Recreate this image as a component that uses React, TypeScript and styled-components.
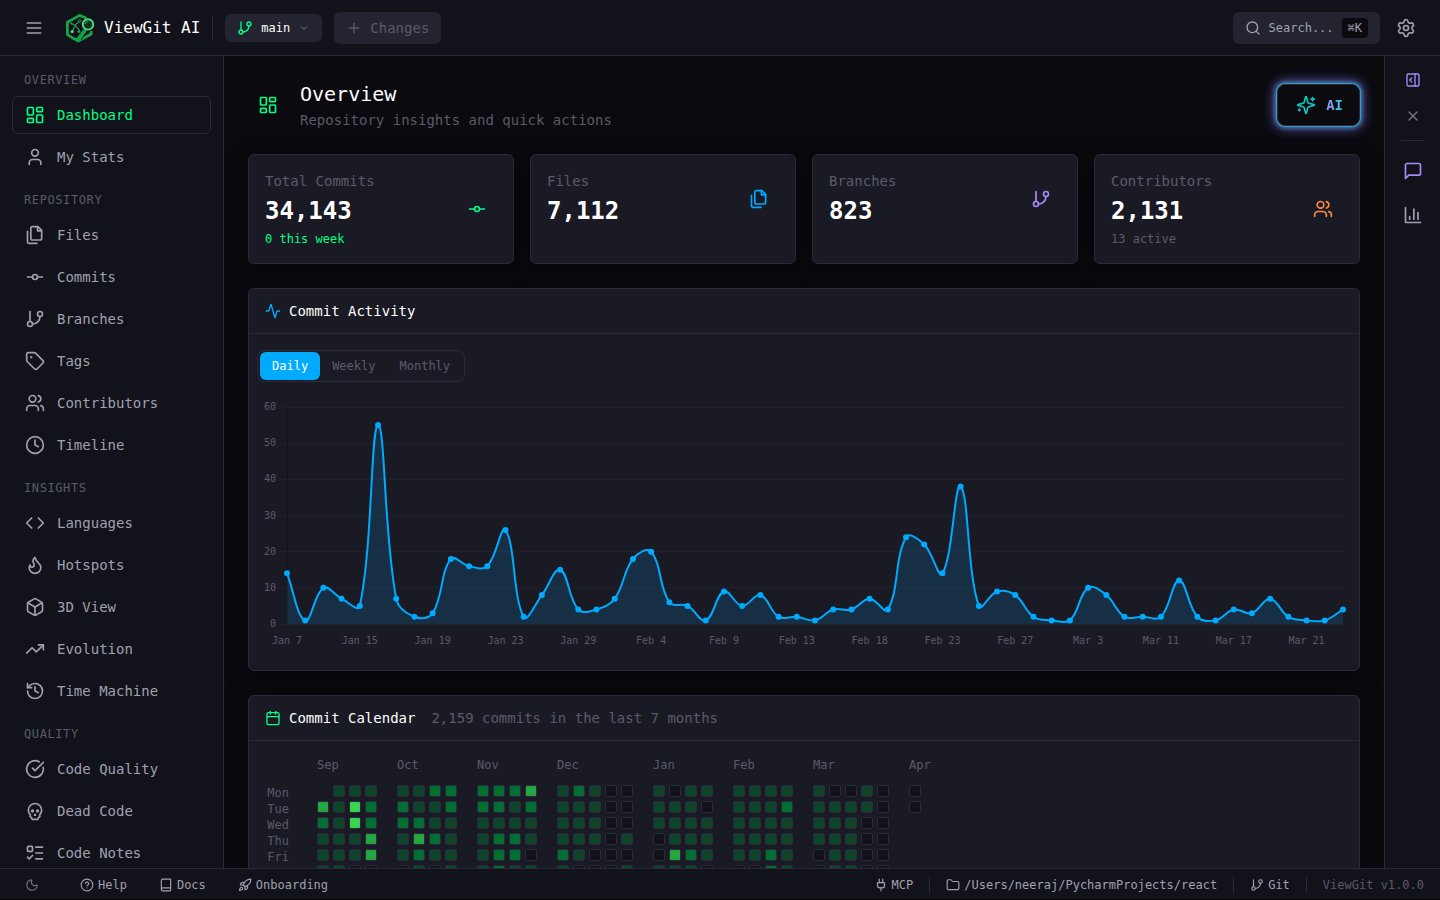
import React, { useLayoutEffect, useRef, useState } from "react";
import styled, { createGlobalStyle, css } from "styled-components";
import {
  Activity,
  Book,
  Box,
  Calendar,
  ChevronDown,
  CircleCheckBig,
  CircleHelp,
  Clock,
  Code,
  Flame,
  Folder,
  GitBranch,
  GitCommitHorizontal,
  History,
  LayoutDashboard,
  ListTodo,
  Moon,
  PanelRightOpen,
  Plug,
  Plus,
  Rocket,
  Search,
  Settings,
  Skull,
  Tag,
  TrendingUp,
  User,
  Users,
  X,
} from "lucide-react";

const color = {
  bg: "#0a0a0f",
  panel: "#12121a",
  card: "#1a1a24",
  raised: "#242430",
  border: "#2a2a3a",
  text: "#ffffff",
  soft: "#a0a0b0",
  dim: "#747482",
  muted: "#5a5a6a",
  green: "#00ff88",
  blue: "#00aaff",
  purple: "#a78bfa",
  orange: "#ff8844",
};

const mono = `"DejaVu Sans Mono", "Liberation Mono", monospace`;

const GlobalStyle = createGlobalStyle`
  *, *::before, *::after { box-sizing: border-box; }
  body {
    margin: 0;
    background: #050508;
    color: ${color.text};
    font-family: ${mono};
    font-size: 14px;
    line-height: 20px;
  }
  button, input, select { font: inherit; color: inherit; }
  h1, h2, p, ul { margin: 0; padding: 0; font-weight: 400; }
  svg { display: block; flex: none; }
`;

/* ---------- icons ---------- */

type IconProps = { size?: number };

const Stroke = ({ size = 20, children }: IconProps & { children: React.ReactNode }) => (
  <svg
    width={size}
    height={size}
    viewBox="0 0 24 24"
    fill="none"
    stroke="currentColor"
    strokeWidth="2"
    strokeLinecap="round"
    strokeLinejoin="round"
    aria-hidden="true"
  >
    {children}
  </svg>
);

const MenuIcon = ({ size }: IconProps) => (
  <Stroke size={size}>
    <path d="M4 6h16" />
    <path d="M4 12h16" />
    <path d="M4 18h16" />
  </Stroke>
);

const FilesIcon = ({ size }: IconProps) => (
  <Stroke size={size}>
    <path d="M15.5 2H8.6c-.4 0-.8.2-1.1.5-.3.3-.5.7-.5 1.1v12.8c0 .4.2.8.5 1.1.3.3.7.5 1.1.5h9.8c.4 0 .8-.2 1.1-.5.3-.3.5-.7.5-1.1V6.5L15.5 2z" />
    <path d="M3 7.6v12.8c0 .4.2.8.5 1.1.3.3.7.5 1.1.5h9.8" />
    <path d="M15 2v5h5" />
  </Stroke>
);

const SparklesIcon = ({ size }: IconProps) => (
  <Stroke size={size}>
    <path d="M9.937 15.5A2 2 0 0 0 8.5 14.063l-6.135-1.582a.5.5 0 0 1 0-.962L8.5 9.936A2 2 0 0 0 9.937 8.5l1.582-6.135a.5.5 0 0 1 .963 0L14.063 8.5A2 2 0 0 0 15.5 9.937l6.135 1.581a.5.5 0 0 1 0 .964L15.5 14.063a2 2 0 0 0-1.437 1.437l-1.582 6.135a.5.5 0 0 1-.963 0z" />
    <path d="M20 3v4" />
    <path d="M22 5h-4" />
    <path d="M4 17v2" />
    <path d="M5 18H3" />
  </Stroke>
);

const ChatIcon = ({ size }: IconProps) => (
  <Stroke size={size}>
    <path d="M21 15a2 2 0 0 1-2 2H7l-4 4V5a2 2 0 0 1 2-2h14a2 2 0 0 1 2 2z" />
  </Stroke>
);

const BarsIcon = ({ size }: IconProps) => (
  <Stroke size={size}>
    <path d="M3 3v18h18" />
    <path d="M18 17V9" />
    <path d="M13 17V5" />
    <path d="M8 17v-3" />
  </Stroke>
);

const Logo = () => (
  <svg width="32" height="32" viewBox="0 0 32 32" fill="none" aria-hidden="true">
    <path
      d="M22.6 6.2 15.6 3.4 3.4 10.2v12.4l6.4 4 5 2.2 12.4-6.8v-3"
      stroke="#16a34a"
      strokeWidth="2.8"
      strokeLinejoin="round"
    />
    <path d="m20.6 19-7 9.2" stroke="#12a046" strokeWidth="4" strokeLinecap="round" />
    <path d="m23 19.4-5.8 8.6" stroke="#12121a" strokeWidth="0.8" />
    <path
      d="m15.2 9.2-3.6 3.6-3.4 6.6M7.6 11.6l3.6 1.8 4.4 5"
      stroke="#22a455"
      strokeWidth="1.1"
    />
    <circle cx="15.6" cy="8.8" r="1.3" stroke="#22a455" strokeWidth="0.9" />
    <circle cx="7.2" cy="11.6" r="1" fill="#22a455" />
    <circle cx="8.2" cy="19.6" r="1.6" fill="#4ade80" />
    <circle cx="14.8" cy="19.6" r="1.4" fill="#22a455" />
    <circle cx="24" cy="12.4" r="5.2" fill="#12301f" stroke="#4ade80" strokeWidth="1.9" />
    <path d="M21.4 12c.2-1.2 1-2 2.2-2.3" stroke="#4ade80" strokeWidth="0.9" />
  </svg>
);

/* ---------- shell ---------- */

const Shell = styled.div`
  display: flex;
  flex-direction: column;
  height: 100vh;
  padding-bottom: 1px;
`;

const TopBar = styled.header`
  display: flex;
  align-items: center;
  justify-content: space-between;
  flex: none;
  height: 56px;
  padding: 0 16px;
  background: ${color.panel};
  border-bottom: 1px solid ${color.border};
`;

const BarGroup = styled.div<{ $gap: number }>`
  display: flex;
  align-items: center;
  gap: ${(p) => p.$gap}px;
`;

const IconButton = styled.button<{ $size: number; $tone?: string }>`
  display: flex;
  align-items: center;
  justify-content: center;
  width: ${(p) => p.$size}px;
  height: ${(p) => p.$size}px;
  padding: 0;
  border: 0;
  background: none;
  color: ${(p) => p.$tone ?? color.soft};
  cursor: pointer;
`;

const Brand = styled.div`
  display: flex;
  align-items: center;
  gap: 8px;
  font-size: 16px;
  line-height: 24px;
`;

const Divider = styled.span<{ $height: number }>`
  width: 1px;
  height: ${(p) => p.$height}px;
  background: ${color.border};
`;

const BranchPicker = styled.label`
  display: flex;
  align-items: center;
  gap: 8px;
  height: 28px;
  padding: 0 12px;
  border-radius: 6px;
  background: ${color.raised};
  font-size: 12px;
  line-height: 16px;

  svg:first-child { color: ${color.green}; }
  svg:last-child { color: ${color.dim}; }
  select {
    appearance: none;
    padding: 0;
    border: 0;
    background: none;
    outline: none;
  }
  option { background: ${color.panel}; }
`;

const ChangesButton = styled.button`
  display: flex;
  align-items: center;
  gap: 8px;
  height: 32px;
  padding: 0 12px;
  border: 0;
  border-radius: 6px;
  background: ${color.raised};
  color: ${color.muted};
`;

const SearchBox = styled.label`
  display: flex;
  align-items: center;
  gap: 8px;
  height: 32px;
  padding: 0 12px;
  border-radius: 6px;
  background: ${color.raised};
  color: ${color.soft};
  font-size: 12px;
  line-height: 16px;

  input {
    width: 9ch;
    padding: 0;
    border: 0;
    outline: none;
    background: none;
  }
  input::placeholder { color: ${color.soft}; opacity: 1; }
  kbd {
    padding: 2px 6px;
    border-radius: 4px;
    background: ${color.bg};
    font-family: inherit;
  }
`;

const Middle = styled.div`
  display: flex;
  flex: 1;
  min-height: 0;
`;

/* ---------- sidebar ---------- */

const Sidebar = styled.nav`
  display: flex;
  flex-direction: column;
  flex: none;
  gap: 16px;
  width: 224px;
  padding: 16px 12px;
  overflow-y: auto;
  scrollbar-width: none;
  background: ${color.panel};
  border-right: 1px solid ${color.border};
`;

const NavSection = styled.section`
  display: flex;
  flex-direction: column;
  gap: 8px;
`;

const NavHeading = styled.h2`
  padding: 0 12px;
  color: ${color.muted};
  font-size: 12px;
  line-height: 16px;
  letter-spacing: 0.05em;
  text-transform: uppercase;
`;

const NavList = styled.ul`
  display: flex;
  flex-direction: column;
  gap: 4px;
  list-style: none;
`;

const NavLink = styled.a<{ $active?: boolean }>`
  display: flex;
  align-items: center;
  gap: 12px;
  padding: 8px 12px;
  border: 1px solid ${(p) => (p.$active ? color.border : "transparent")};
  border-radius: 6px;
  color: ${(p) => (p.$active ? color.green : color.soft)};
  text-decoration: none;
`;

/* ---------- main ---------- */

const Main = styled.main`
  display: flex;
  flex-direction: column;
  flex: 1;
  gap: 24px;
  min-width: 0;
  padding: 24px;
  overflow-y: auto;
  scrollbar-width: none;
  background: ${color.bg};
`;

const PageHead = styled.div`
  display: flex;
  align-items: center;
  justify-content: space-between;
`;

const PageTitle = styled.h1`
  margin-bottom: 2px;
  font-size: 20px;
  line-height: 28px;
`;

const PageNote = styled.p`
  color: ${color.muted};
`;

const IconTile = styled.span<{ $tone: string }>`
  display: flex;
  align-items: center;
  justify-content: center;
  flex: none;
  width: 40px;
  height: 40px;
  color: ${(p) => p.$tone};
`;

const AiButton = styled.button`
  display: flex;
  align-items: center;
  gap: 10px;
  height: 42px;
  padding: 0 16px 0 18px;
  border: 1px solid ${color.border};
  border-radius: 8px;
  background: ${color.bg};
  color: #06c8c0;
  font-weight: 700;
  box-shadow:
    0 0 0 1px #2f9fc2,
    0 0 4px 2px rgba(80, 180, 240, 0.6),
    0 0 12px 3px rgba(139, 120, 250, 0.6);

  span {
    background: linear-gradient(90deg, #a78bfa, #22d3ee);
    background-clip: text;
    -webkit-background-clip: text;
    color: transparent;
  }
`;

const cardSurface = css`
  background: ${color.card};
  border: 1px solid ${color.border};
  border-radius: 6px;
  box-shadow: 0 4px 24px rgba(0, 0, 0, 0.4);
`;

const StatGrid = styled.div`
  display: grid;
  grid-template-columns: repeat(4, 1fr);
  gap: 16px;
`;

const StatCard = styled.article`
  ${cardSurface}
  padding: 16px;
`;

const StatRow = styled.div`
  display: flex;
  align-items: center;
  justify-content: space-between;
`;

const StatText = styled.div`
  display: flex;
  flex-direction: column;
  gap: 4px;
`;

const StatLabel = styled.p`
  color: ${color.muted};
`;

const StatValue = styled.p`
  font-size: 24px;
  line-height: 32px;
  font-weight: 700;
`;

const StatNote = styled.p<{ $tone: string }>`
  color: ${(p) => p.$tone};
  font-size: 12px;
  line-height: 16px;
`;

const Panel = styled.section`
  ${cardSurface}
  flex: none;
`;

const PanelHead = styled.div<{ $tone: string }>`
  display: flex;
  align-items: center;
  gap: 8px;
  padding: 12px 16px;
  border-bottom: 1px solid ${color.border};

  svg { color: ${(p) => p.$tone}; }
  p { margin-left: 8px; color: ${color.muted}; }
`;

const PanelTitle = styled.h2`
  font-size: 14px;
  line-height: 20px;
`;

const ChartBody = styled.div`
  display: flex;
  flex-direction: column;
  align-items: flex-start;
  gap: 16px;
  padding: 16px 8px;
`;

const Tabs = styled.div`
  display: flex;
  padding: 1px 2px;
  border: 1px solid ${color.border};
  border-radius: 8px;
`;

const Tab = styled.button<{ $on?: boolean }>`
  padding: 6px 12px;
  border: 0;
  border-radius: 6px;
  background: ${(p) => (p.$on ? color.blue : "none")};
  color: ${(p) => (p.$on ? color.text : color.muted)};
  font-size: 12px;
  line-height: 16px;
`;

const ChartFrame = styled.div`
  width: 100%;
  height: 256px;
`;

const AxisText = styled.text`
  fill: ${color.muted};
  font-size: 10px;
`;

/* ---------- calendar ---------- */

const CalendarBody = styled.div`
  display: flex;
  gap: 28px;
  padding: 16px;
  color: ${color.muted};
  font-size: 12px;
  line-height: 16px;
`;

const WeekDays = styled.div`
  display: flex;
  flex-direction: column;
  width: 24px;
  padding-top: 28px;
  text-align: right;
`;

const Months = styled.div`
  display: flex;
  gap: 20px;
`;

const Month = styled.div`
  display: flex;
  flex-direction: column;
  gap: 12px;
`;

const Days = styled.div`
  display: grid;
  grid-template-rows: repeat(7, 12px);
  grid-auto-columns: 12px;
  grid-auto-flow: column;
  gap: 4px;
`;

const levels = [color.panel, "#0e4429", "#006d32", "#26a641", "#39d353"];

const Day = styled.span<{ $level: number }>`
  border: 1px solid ${(p) => (p.$level < 0 ? "transparent" : color.border)};
  border-radius: 2px;
  background: ${(p) => (p.$level < 0 ? "none" : levels[p.$level])};
`;

/* ---------- right rail and status bar ---------- */

const Rail = styled.aside`
  display: flex;
  flex-direction: column;
  align-items: center;
  flex: none;
  gap: 8px;
  width: 56px;
  padding-top: 10px;
  background: ${color.panel};
  border-left: 1px solid ${color.border};
`;

const RailGroup = styled.div<{ $gap: number }>`
  display: flex;
  flex-direction: column;
  gap: ${(p) => p.$gap}px;
`;

const RailLine = styled.hr`
  width: 24px;
  height: 1px;
  margin: 2px 0;
  border: 0;
  background: ${color.border};
`;

const StatusBar = styled.footer`
  display: flex;
  align-items: center;
  justify-content: space-between;
  flex: none;
  height: 31px;
  padding: 2px 16px 0;
  background: ${color.panel};
  border-top: 1px solid ${color.border};
  color: ${color.soft};
  font-size: 12px;
  line-height: 16px;
`;

const MoonButton = styled(IconButton)`
  height: 24px;
`;

const StatusLink = styled.a`
  display: flex;
  align-items: center;
  gap: 4px;
  color: inherit;
  text-decoration: none;
`;

const StatusLinks = styled.div`
  display: flex;
  gap: 32px;
`;

const Version = styled.span`
  color: ${color.muted};
`;

/* ---------- data ---------- */

type NavItem = { label: string; Icon: React.ComponentType<{ size?: number }> };

const nav: { title: string; items: NavItem[] }[] = [
  {
    title: "Overview",
    items: [
      { label: "Dashboard", Icon: LayoutDashboard },
      { label: "My Stats", Icon: User },
    ],
  },
  {
    title: "Repository",
    items: [
      { label: "Files", Icon: FilesIcon },
      { label: "Commits", Icon: GitCommitHorizontal },
      { label: "Branches", Icon: GitBranch },
      { label: "Tags", Icon: Tag },
      { label: "Contributors", Icon: Users },
      { label: "Timeline", Icon: Clock },
    ],
  },
  {
    title: "Insights",
    items: [
      { label: "Languages", Icon: Code },
      { label: "Hotspots", Icon: Flame },
      { label: "3D View", Icon: Box },
      { label: "Evolution", Icon: TrendingUp },
      { label: "Time Machine", Icon: History },
    ],
  },
  {
    title: "Quality",
    items: [
      { label: "Code Quality", Icon: CircleCheckBig },
      { label: "Dead Code", Icon: Skull },
      { label: "Code Notes", Icon: ListTodo },
    ],
  },
];

const stats = [
  {
    label: "Total Commits",
    value: "34,143",
    note: "0 this week",
    noteTone: color.green,
    tone: color.green,
    Icon: GitCommitHorizontal,
  },
  { label: "Files", value: "7,112", tone: color.blue, Icon: FilesIcon },
  { label: "Branches", value: "823", tone: color.purple, Icon: GitBranch },
  {
    label: "Contributors",
    value: "2,131",
    note: "13 active",
    noteTone: color.muted,
    tone: color.orange,
    Icon: Users,
  },
];

const commits = [
  14, 1, 10, 7, 5, 55, 7, 2, 3, 18, 16, 16, 26, 2, 8, 15, 4, 4, 7, 18, 20, 6, 5, 1, 9, 5, 8, 2, 2,
  1, 4, 4, 7, 4, 24, 22, 14, 38, 5, 9, 8, 2, 1, 1, 10, 8, 2, 2, 2, 12, 2, 1, 4, 3, 7, 2, 1, 1, 4,
];

const dates = [
  "Jan 7", "Jan 15", "Jan 19", "Jan 23", "Jan 29", "Feb 4", "Feb 9", "Feb 13",
  "Feb 18", "Feb 23", "Feb 27", "Mar 3", "Mar 11", "Mar 17", "Mar 21",
];

/* One string per week, Monday to Sunday; a dot is a day outside the range. */
const calendar: { name: string; weeks: string[] }[] = [
  { name: "Sep", weeks: [".321110", "1111110", "1441100", "1223300"] },
  { name: "Oct", weeks: ["1221100", "1123210", "2112100", "2211110"] },
  { name: "Nov", weeks: ["2211110", "2212220", "2112210", "3211010"] },
  { name: "Dec", weeks: ["1111210", "2111100", "1111000", "0000000", "0001010"] },
  { name: "Jan", weeks: ["1110010", "0111310", "1111210", "1011100"] },
  { name: "Feb", weeks: ["1111100", "1111100", "1111220", "1211110"] },
  { name: "Mar", weeks: ["1111000", "0111110", "0111110", "1100000", "0000000"] },
  { name: "Apr", weeks: ["00....."] },
];

/* ---------- chart ---------- */

type Point = { x: number; y: number };

/* Cardinal spline whose control points stay inside the plot area. */
const spline = (pts: Point[], tension: number, top: number, bottom: number) => {
  const clamp = (y: number) => Math.min(bottom, Math.max(top, y));
  const dist = (a: Point, b: Point) => Math.hypot(b.x - a.x, b.y - a.y);
  const handles = pts.map((p, i) => {
    const prev = pts[i - 1] ?? p;
    const next = pts[i + 1] ?? p;
    const before = dist(prev, p);
    const after = dist(p, next);
    const a = (tension * before) / (before + after);
    const b = (tension * after) / (before + after);
    return {
      inX: p.x - a * (next.x - prev.x),
      inY: clamp(p.y - a * (next.y - prev.y)),
      outX: p.x + b * (next.x - prev.x),
      outY: clamp(p.y + b * (next.y - prev.y)),
    };
  });
  return pts
    .map((p, i) =>
      i === 0
        ? `M${p.x},${p.y}`
        : `C${handles[i - 1].outX},${handles[i - 1].outY} ${handles[i].inX},${handles[i].inY} ${p.x},${p.y}`,
    )
    .join("");
};

const CommitChart = () => {
  const frame = useRef<HTMLDivElement>(null);
  const [width, setWidth] = useState(1000);

  useLayoutEffect(() => {
    const el = frame.current;
    if (!el) return;
    const measure = () => setWidth(el.clientWidth);
    measure();
    const observer = new ResizeObserver(measure);
    observer.observe(el);
    return () => observer.disconnect();
  }, []);

  const left = 30;
  const right = width - 8;
  const top = 9;
  const bottom = 226;
  const yOf = (v: number) => bottom - (v / 60) * (bottom - top);
  const pts = commits.map((v, i) => ({
    x: left + (i * (right - left)) / (commits.length - 1),
    y: yOf(v),
  }));
  const line = spline(pts, 0.4, top, bottom);

  return (
    <ChartFrame ref={frame}>
      <svg width={width} height="256" role="img" aria-label="Commits per day">
        {[0, 10, 20, 30, 40, 50, 60].map((v) => (
          <g key={v}>
            <line
              x1={left - 8}
              x2={right}
              y1={Math.floor(yOf(v)) + 0.5}
              y2={Math.floor(yOf(v)) + 0.5}
              stroke="#20202c"
            />
            <AxisText x={left - 11} y={yOf(v) + 3} textAnchor="end">
              {v}
            </AxisText>
          </g>
        ))}
        <line x1={left + 0.5} x2={left + 0.5} y1={top} y2={bottom} stroke="#14141d" />
        <path d={`${line}L${right},${bottom}L${left},${bottom}Z`} fill={color.blue} fillOpacity="0.15" />
        <path d={line} fill="none" stroke={color.blue} strokeWidth="2" strokeLinejoin="round" />
        {pts.map((p, i) => (
          <circle key={i} cx={p.x} cy={p.y} r="3" fill={color.blue} />
        ))}
        {dates.map((d, i) => (
          <AxisText key={d} x={pts[i * 4].x} y="246" textAnchor="middle">
            {d}
          </AxisText>
        ))}
      </svg>
    </ChartFrame>
  );
};

/* ---------- page ---------- */

const App = () => {
  const [range, setRange] = useState("Daily");

  return (
    <Shell>
      <GlobalStyle />
      <TopBar>
        <BarGroup $gap={12}>
          <IconButton $size={36} aria-label="Toggle menu">
            <MenuIcon size={20} />
          </IconButton>
          <Brand>
            <Logo />
            ViewGit AI
          </Brand>
          <Divider $height={24} />
          <BranchPicker>
            <GitBranch size={16} />
            <select aria-label="Branch" defaultValue="main">
              <option>main</option>
            </select>
            <ChevronDown size={12} />
          </BranchPicker>
          <ChangesButton>
            <Plus size={16} />
            Changes
          </ChangesButton>
        </BarGroup>
        <BarGroup $gap={8}>
          <SearchBox>
            <Search size={16} />
            <input type="text" placeholder="Search..." aria-label="Search" />
            <kbd>⌘K</kbd>
          </SearchBox>
          <IconButton $size={36} aria-label="Settings">
            <Settings size={20} />
          </IconButton>
        </BarGroup>
      </TopBar>

      <Middle>
        <Sidebar>
          {nav.map(({ title, items }) => (
            <NavSection key={title}>
              <NavHeading>{title}</NavHeading>
              <NavList>
                {items.map(({ label, Icon }) => (
                  <li key={label}>
                    <NavLink href="#" $active={label === "Dashboard"}>
                      <Icon size={20} />
                      {label}
                    </NavLink>
                  </li>
                ))}
              </NavList>
            </NavSection>
          ))}
        </Sidebar>

        <Main>
          <PageHead>
            <BarGroup $gap={12}>
              <IconTile $tone={color.green}>
                <LayoutDashboard size={20} />
              </IconTile>
              <div>
                <PageTitle>Overview</PageTitle>
                <PageNote>Repository insights and quick actions</PageNote>
              </div>
            </BarGroup>
            <AiButton>
              <SparklesIcon size={20} />
              <span>AI</span>
            </AiButton>
          </PageHead>

          <StatGrid>
            {stats.map(({ label, value, note, noteTone, tone, Icon }) => (
              <StatCard key={label}>
                <StatRow>
                  <StatText>
                    <StatLabel>{label}</StatLabel>
                    <StatValue>{value}</StatValue>
                    {note && <StatNote $tone={noteTone ?? color.muted}>{note}</StatNote>}
                  </StatText>
                  <IconTile $tone={tone}>
                    <Icon size={20} />
                  </IconTile>
                </StatRow>
              </StatCard>
            ))}
          </StatGrid>

          <Panel>
            <PanelHead $tone={color.blue}>
              <Activity size={16} />
              <PanelTitle>Commit Activity</PanelTitle>
            </PanelHead>
            <ChartBody>
              <Tabs>
                {["Daily", "Weekly", "Monthly"].map((name) => (
                  <Tab key={name} $on={name === range} onClick={() => setRange(name)}>
                    {name}
                  </Tab>
                ))}
              </Tabs>
              <CommitChart />
            </ChartBody>
          </Panel>

          <Panel>
            <PanelHead $tone={color.green}>
              <Calendar size={16} />
              <PanelTitle>Commit Calendar</PanelTitle>
              <p>2,159 commits in the last 7 months</p>
            </PanelHead>
            <CalendarBody>
              <WeekDays>
                {["Mon", "Tue", "Wed", "Thu", "Fri"].map((d) => (
                  <span key={d}>{d}</span>
                ))}
              </WeekDays>
              <Months>
                {calendar.map(({ name, weeks }) => (
                  <Month key={name}>
                    <span>{name}</span>
                    <Days>
                      {[...weeks.join("")].map((c, i) => (
                        <Day key={i} $level={c === "." ? -1 : Number(c)} />
                      ))}
                    </Days>
                  </Month>
                ))}
              </Months>
            </CalendarBody>
          </Panel>
        </Main>

        <Rail>
          <RailGroup $gap={8}>
            <IconButton $size={28} $tone={color.purple} aria-label="Expand panel">
              <PanelRightOpen size={16} />
            </IconButton>
            <IconButton $size={28} $tone={color.dim} aria-label="Close panel">
              <X size={16} />
            </IconButton>
          </RailGroup>
          <RailLine />
          <RailGroup $gap={4}>
            <IconButton $size={40} $tone={color.purple} aria-label="Chat">
              <ChatIcon size={20} />
            </IconButton>
            <IconButton $size={40} aria-label="Charts">
              <BarsIcon size={20} />
            </IconButton>
          </RailGroup>
        </Rail>
      </Middle>

      <StatusBar>
        <BarGroup $gap={32}>
          <MoonButton $size={32} $tone={color.dim} aria-label="Theme">
            <Moon size={14} />
          </MoonButton>
          <StatusLinks>
            <StatusLink href="#">
              <CircleHelp size={14} />
              Help
            </StatusLink>
            <StatusLink href="#">
              <Book size={14} />
              Docs
            </StatusLink>
            <StatusLink href="#">
              <Rocket size={14} />
              Onboarding
            </StatusLink>
          </StatusLinks>
        </BarGroup>
        <BarGroup $gap={16}>
          <StatusLink href="#">
            <Plug size={14} />
            MCP
          </StatusLink>
          <Divider $height={16} />
          <StatusLink href="#">
            <Folder size={14} />
            /Users/neeraj/PycharmProjects/react
          </StatusLink>
          <Divider $height={16} />
          <StatusLink href="#">
            <GitBranch size={14} />
            Git
          </StatusLink>
          <Divider $height={16} />
          <Version>ViewGit v1.0.0</Version>
        </BarGroup>
      </StatusBar>
    </Shell>
  );
};

export default App;
